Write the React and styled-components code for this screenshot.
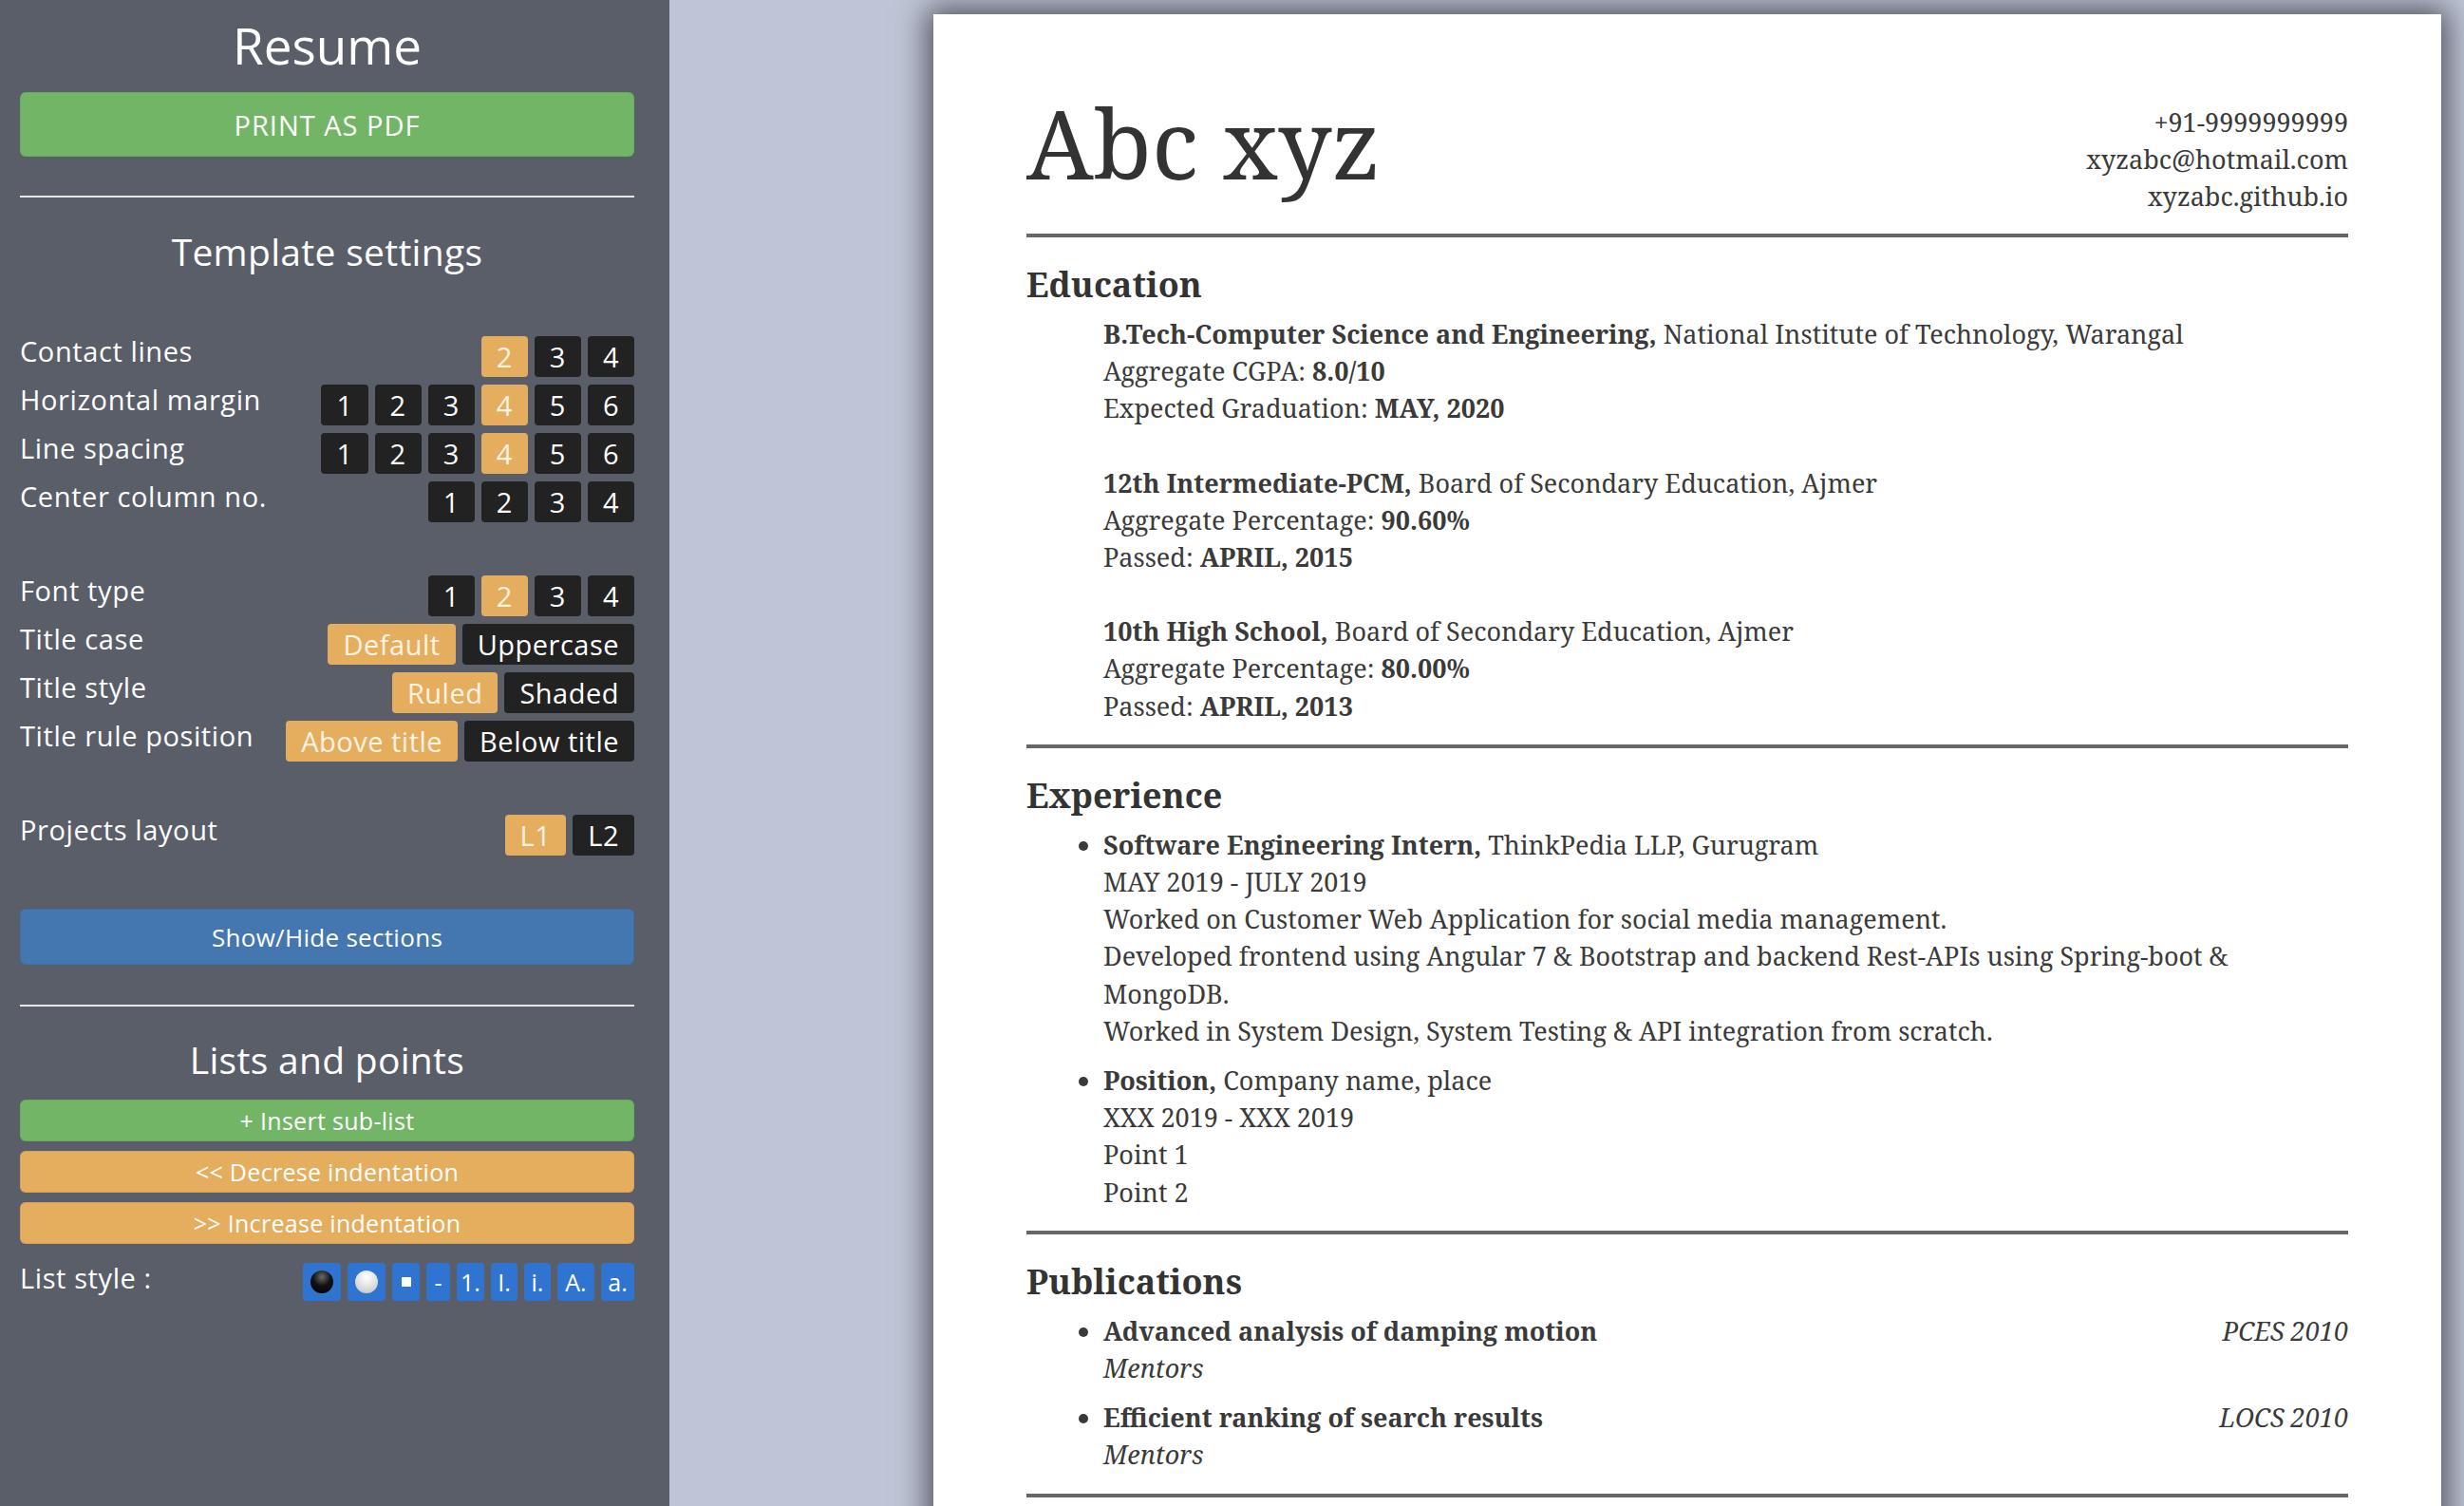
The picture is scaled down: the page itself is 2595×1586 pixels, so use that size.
import React from "react"
import styled, { createGlobalStyle } from "styled-components"

const GlobalStyle = createGlobalStyle`
  html, body {
    margin: 0;
    padding: 0;
    height: 100%;
    overflow: hidden;
  }
  body {
    font-family: "Open Sans", "Liberation Sans", sans-serif;
  }
  * {
    box-sizing: border-box;
  }
`

const Layout = styled.div`
  display: flex;
  width: 100vw;
  height: 100vh;
  overflow: hidden;
`

// Sidebar
const Sidebar = styled.aside`
  flex: 0 0 705px;
  height: 100%;
  background-color: #5a5e69;
  color: #fff;
  padding: 0 37px 0 21px;
  display: flex;
  flex-direction: column;
`

const SideTitle = styled.h1`
  margin: 17px 0 0;
  font-size: 53px;
  line-height: 62px;
  font-weight: 400;
  text-align: center;
`

const SectionHeading = styled.h2`
  margin: ${(p) => p.$top || 33}px 0 0;
  font-size: 39px;
  line-height: 47px;
  font-weight: 400;
  text-align: center;
  letter-spacing: 0.3px;
`

const WideButton = styled.button`
  display: block;
  width: 100%;
  height: ${(p) => p.$height || 44}px;
  margin-top: ${(p) => p.$top || 0}px;
  border: 1px solid rgba(0, 0, 0, 0.06);
  border-radius: 6px;
  background-color: ${(p) => p.$color};
  color: #fff;
  font-family: "Open Sans", "Liberation Sans", sans-serif;
  font-size: ${(p) => p.$size || 25}px;
  letter-spacing: ${(p) => p.$spacing || 0.3}px;
  cursor: pointer;
`

const Divider = styled.hr`
  margin: ${(p) => p.$top}px 0 0;
  border: 0;
  height: 2px;
  background-color: #e6e6e6;
`

const SettingRow = styled.div`
  display: flex;
  justify-content: space-between;
  align-items: flex-start;
  margin-top: ${(p) => p.$top || 8}px;
`

const Label = styled.span`
  font-size: 29px;
  line-height: 32px;
  letter-spacing: 0.6px;
  white-space: nowrap;
`

const ButtonGroup = styled.div`
  display: flex;
  gap: 7px;
`

const OptionButton = styled.button`
  height: 43px;
  padding: 0 16px;
  border: 0;
  border-radius: 4px;
  background-color: ${(p) => (p.$active ? "#e5ae5f" : "#222222")};
  color: ${(p) => (p.$active ? "#fdf3e3" : "#ffffff")};
  font-family: "Open Sans", "Liberation Sans", sans-serif;
  font-size: 29px;
  letter-spacing: 0.5px;
  line-height: 1;
  display: flex;
  align-items: center;
  justify-content: center;
`

const ListButton = styled.button`
  height: 40px;
  min-width: ${(p) => p.$w}px;
  padding: 0;
  border: 0;
  border-radius: 4px;
  background-color: #2f74d1;
  color: #fff;
  font-family: "Open Sans", "Liberation Sans", sans-serif;
  font-size: 25px;
  display: flex;
  align-items: center;
  justify-content: center;
`

const Sphere = styled.span`
  width: 24px;
  height: 24px;
  border-radius: 50%;
  background: ${(p) =>
    p.$light
      ? "radial-gradient(circle at 50% 30%, #ffffff 0%, #e4e4e4 45%, #bdbdbd 100%)"
      : "radial-gradient(circle at 50% 28%, #6a6a6a 0%, #111 45%, #000 100%)"};
`

const Square = styled.span`
  width: 10px;
  height: 10px;
  background: #fff;
`

// Canvas with page
const Canvas = styled.main`
  flex: 1;
  height: 100%;
  background-color: #bfc5d6;
  padding: 15px 24px 0 278px;
  overflow: hidden;
`

const Page = styled.div`
  background: #fff;
  min-height: 1700px;
  padding: 94px 98px 0;
  box-shadow: 0 0 30px 6px rgba(55, 58, 68, 0.85);
  font-family: "Noto Serif", "DejaVu Serif", serif;
  color: #3a3a3a;
  font-size: 27px;
  line-height: 39.2px;
`

const Header = styled.header`
  display: flex;
  justify-content: space-between;
  align-items: flex-start;
`

const Name = styled.div`
  font-size: 100px;
  line-height: 1;
  margin-top: -9px;
  color: #333;
`

const Contact = styled.div`
  text-align: right;
  line-height: 39px;
`

const Rule = styled.div`
  height: 4px;
  background: #666;
  margin-top: ${(p) => p.$top || 21}px;
`

const Heading = styled.h3`
  margin: 30px 0 12px;
  font-size: 36px;
  line-height: 40px;
  font-weight: 700;
  color: #333;
`

const Entry = styled.div`
  padding-left: 81px;
  & + & {
    margin-top: 39px;
  }
`

const Bullets = styled.ul`
  margin: 0;
  padding-left: 81px;
  list-style: disc;
  li + li {
    margin-top: 13px;
  }
`

const Line = styled.div`
  display: flex;
  justify-content: space-between;
`

const Venue = styled.i`
  font-style: italic;
`

const education = [
  {
    title: "B.Tech-Computer Science and Engineering,",
    place: " National Institute of Technology, Warangal",
    rows: [
      ["Aggregate CGPA: ", "8.0/10"],
      ["Expected Graduation: ", "MAY, 2020"],
    ],
  },
  {
    title: "12th Intermediate-PCM,",
    place: " Board of Secondary Education, Ajmer",
    rows: [
      ["Aggregate Percentage: ", "90.60%"],
      ["Passed: ", "APRIL, 2015"],
    ],
  },
  {
    title: "10th High School,",
    place: " Board of Secondary Education, Ajmer",
    rows: [
      ["Aggregate Percentage: ", "80.00%"],
      ["Passed: ", "APRIL, 2013"],
    ],
  },
]

const Options = ({ items, active }) => (
  <ButtonGroup>
    {items.map((it) => (
      <OptionButton key={it} $active={it === active}>
        {it}
      </OptionButton>
    ))}
  </ButtonGroup>
)

const App = () => {
  return (
    <Layout>
      <GlobalStyle />
      <Sidebar>
        <SideTitle>Resume</SideTitle>
        <WideButton $color="#73b566" $height={68} $top={18} $size={29} $spacing={1}>
          PRINT AS PDF
        </WideButton>
        <Divider $top={41} />
        <SectionHeading>Template settings</SectionHeading>

        <SettingRow $top={66}>
          <Label>Contact lines</Label>
          <Options items={["2", "3", "4"]} active="2" />
        </SettingRow>
        <SettingRow>
          <Label>Horizontal margin</Label>
          <Options items={["1", "2", "3", "4", "5", "6"]} active="4" />
        </SettingRow>
        <SettingRow>
          <Label>Line spacing</Label>
          <Options items={["1", "2", "3", "4", "5", "6"]} active="4" />
        </SettingRow>
        <SettingRow>
          <Label>Center column no.</Label>
          <Options items={["1", "2", "3", "4"]} />
        </SettingRow>

        <SettingRow $top={56}>
          <Label>Font type</Label>
          <Options items={["1", "2", "3", "4"]} active="2" />
        </SettingRow>
        <SettingRow>
          <Label>Title case</Label>
          <Options items={["Default", "Uppercase"]} active="Default" />
        </SettingRow>
        <SettingRow>
          <Label>Title style</Label>
          <Options items={["Ruled", "Shaded"]} active="Ruled" />
        </SettingRow>
        <SettingRow>
          <Label>Title rule position</Label>
          <Options items={["Above title", "Below title"]} active="Above title" />
        </SettingRow>

        <SettingRow $top={56}>
          <Label>Projects layout</Label>
          <Options items={["L1", "L2"]} active="L1" />
        </SettingRow>

        <WideButton $color="#4476b0" $height={59} $top={56} $size={26}>
          Show/Hide sections
        </WideButton>
        <Divider $top={42} />
        <SectionHeading $top={32}>Lists and points</SectionHeading>
        <WideButton $color="#73b566" $top={19}>
          + Insert sub-list
        </WideButton>
        <WideButton $color="#e5ae5f" $top={10}>
          &lt;&lt; Decrese indentation
        </WideButton>
        <WideButton $color="#e5ae5f" $top={10}>
          &gt;&gt; Increase indentation
        </WideButton>

        <SettingRow $top={20}>
          <Label>List style :</Label>
          <ButtonGroup>
            <ListButton $w={40}>
              <Sphere />
            </ListButton>
            <ListButton $w={40}>
              <Sphere $light />
            </ListButton>
            <ListButton $w={29}>
              <Square />
            </ListButton>
            <ListButton $w={25}>-</ListButton>
            <ListButton $w={29}>1.</ListButton>
            <ListButton $w={28}>I.</ListButton>
            <ListButton $w={28}>i.</ListButton>
            <ListButton $w={39}>A.</ListButton>
            <ListButton $w={35}>a.</ListButton>
          </ButtonGroup>
        </SettingRow>
      </Sidebar>

      <Canvas>
        <Page>
          <Header>
            <Name>Abc xyz</Name>
            <Contact>
              <div>+91-9999999999</div>
              <div>xyzabc@hotmail.com</div>
              <div>xyzabc.github.io</div>
            </Contact>
          </Header>
          <Rule $top={20} />

          <Heading>Education</Heading>
          {education.map((e) => (
            <Entry key={e.title}>
              <div>
                <b>{e.title}</b>
                {e.place}
              </div>
              {e.rows.map(([k, v]) => (
                <div key={k}>
                  {k}
                  <b>{v}</b>
                </div>
              ))}
            </Entry>
          ))}
          <Rule />

          <Heading>Experience</Heading>
          <Bullets>
            <li>
              <b>Software Engineering Intern,</b> ThinkPedia LLP, Gurugram
              <div>MAY 2019 - JULY 2019</div>
              <div>Worked on Customer Web Application for social media management.</div>
              <div>
                Developed frontend using Angular 7 &amp; Bootstrap and backend Rest-APIs using Spring-boot &amp;
                MongoDB.
              </div>
              <div>Worked in System Design, System Testing &amp; API integration from scratch.</div>
            </li>
            <li>
              <b>Position,</b> Company name, place
              <div>XXX 2019 - XXX 2019</div>
              <div>Point 1</div>
              <div>Point 2</div>
            </li>
          </Bullets>
          <Rule />

          <Heading>Publications</Heading>
          <Bullets>
            <li>
              <Line>
                <b>Advanced analysis of damping motion</b>
                <Venue>PCES 2010</Venue>
              </Line>
              <i>Mentors</i>
            </li>
            <li>
              <Line>
                <b>Efficient ranking of search results</b>
                <Venue>LOCS 2010</Venue>
              </Line>
              <i>Mentors</i>
            </li>
          </Bullets>
          <Rule />
        </Page>
      </Canvas>
    </Layout>
  )
}

export default App
